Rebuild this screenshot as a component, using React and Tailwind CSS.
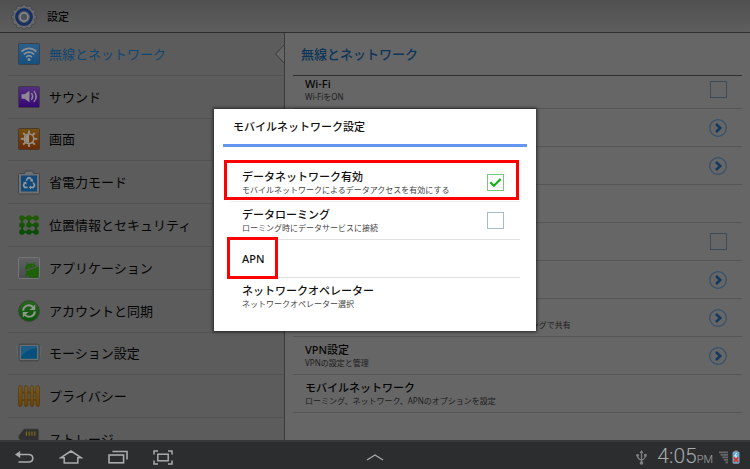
import React, { useState } from 'react';

const WifiIcon = () => (
  <svg viewBox="0 0 22 22" className="w-[22px] h-[22px]">
    <defs>
      <linearGradient id="wifiBg" x1="0" y1="0" x2="0" y2="1">
        <stop offset="0" stopColor="#2d5f8c" />
        <stop offset="1" stopColor="#14507f" />
      </linearGradient>
    </defs>
    <rect x="0.5" y="0.5" width="21" height="21" rx="1.2" fill="url(#wifiBg)" stroke="#3c4248" />
    <g fill="none" stroke="#8b9094" strokeWidth="1.7">
      <path d="M3.6 8.6C7.8 4.2 14.2 4.2 18.4 8.6" />
      <path d="M5.8 11.4C8.8 8.4 13.2 8.4 16.2 11.4" />
      <path d="M8.1 14.1C9.9 12.4 12.1 12.4 13.9 14.1" />
    </g>
    <circle cx="11" cy="16.6" r="1.5" fill="#8b9094" />
  </svg>
);

const SoundIcon = () => (
  <svg viewBox="0 0 22 22" className="w-[22px] h-[22px]">
    <defs>
      <linearGradient id="soundBg" x1="0" y1="0" x2="0" y2="1">
        <stop offset="0" stopColor="#533080" />
        <stop offset="1" stopColor="#350573" />
      </linearGradient>
    </defs>
    <rect x="0.5" y="0.5" width="21" height="21" rx="1.2" fill="url(#soundBg)" stroke="#40394a" />
    <path d="M3.5 8.2H6.5L11.5 4.8V16.2L6.5 12.8H3.5Z" fill="#8d8893" />
    <g fill="none" stroke="#8d8893" strokeWidth="1.4" strokeLinecap="round">
      <path d="M13.7 7.6C15 9.4 15 11.6 13.7 13.4" />
      <path d="M16.2 5.6C18.6 8.6 18.6 12.4 16.2 15.4" />
    </g>
  </svg>
);

const DisplayIcon = () => (
  <svg viewBox="0 0 22 22" className="w-[22px] h-[22px]">
    <defs>
      <linearGradient id="displayBg" x1="0" y1="0" x2="0" y2="1">
        <stop offset="0" stopColor="#75500f" />
        <stop offset="1" stopColor="#6a2a05" />
      </linearGradient>
    </defs>
    <rect x="0.5" y="0.5" width="21" height="21" rx="1.2" fill="url(#displayBg)" stroke="#483a2c" />
    <path
      d="M11 2.6V5.6M11 16V19M2.8 10.8H5.8M16.2 10.8H19.2M5.2 5L7.3 7.1M14.7 14.5L16.8 16.6M16.8 5L14.7 7.1M7.3 14.5L5.2 16.6"
      stroke="#98928a"
      strokeWidth="1.8"
    />
    <circle cx="11" cy="10.8" r="4.8" fill="#6f3c0a" stroke="#98928a" strokeWidth="1.5" />
    <path d="M11 6.8A4 4 0 0 0 11 14.8Z" fill="#98928a" />
  </svg>
);

const PowerIcon = () => (
  <svg viewBox="0 0 22 25" className="w-[22px] h-[25px]">
    <path
      d="M1.5 3.5H6.6L7.4 1H14.6L15.4 3.5H20.5C21.2 3.5 21.5 3.9 21.5 4.5V22.5C21.5 23.6 21 24 20 24H2C1 24 0.5 23.6 0.5 22.5V4.5C0.5 3.9 0.8 3.5 1.5 3.5Z"
      fill="#6f7173"
      stroke="#454545"
    />
    <rect x="3" y="5.5" width="16" height="16" fill="#104a7b" />
    <g fill="none" stroke="#8f9599" strokeWidth="1.7">
      <path d="M8.3 10.6L10 7.8H12L13.6 10.3" />
      <path d="M15.2 12.6L16.6 15.2L15.4 17.4H12" />
      <path d="M9.6 17.4H6.6L5.5 15.2L7 12.4" />
    </g>
    <path d="M14.9 8.8V11.9L11.9 11ZM13 15.3V19.4L10.8 17.4ZM4.8 12.7L8.2 11.4L8.6 14.4Z" fill="#8f9599" />
  </svg>
);

const SecurityIcon = () => (
  <svg viewBox="0 0 22 22" className="w-[22px] h-[22px]">
    <defs>
      <linearGradient id="dots" gradientUnits="userSpaceOnUse" x1="0" y1="1" x2="0" y2="21">
        <stop offset="0" stopColor="#245c05" />
        <stop offset="1" stopColor="#064a08" />
      </linearGradient>
    </defs>
    <g fill="url(#dots)">
      <rect x="3" y="3" width="16" height="2" />
      <rect x="10" y="10" width="9" height="2" />
      <rect x="3" y="17" width="16" height="2" />
      <rect x="3" y="4" width="2" height="14" />
      <rect x="17" y="11" width="2" height="7" />
      <rect x="10" y="4" width="2" height="7" />
      {[4, 11, 18].map((y) => [4, 11, 18].map((x) => <circle key={`${x}-${y}`} cx={x} cy={y} r="2.8" />))}
    </g>
  </svg>
);

const AppsIcon = () => (
  <svg viewBox="0 0 22 22" className="w-[22px] h-[22px]">
    <defs>
      <linearGradient id="appBg" x1="0" y1="0" x2="0" y2="1">
        <stop offset="0" stopColor="#5f6062" />
        <stop offset="1" stopColor="#4b4c4d" />
      </linearGradient>
    </defs>
    <rect x="0.5" y="0.5" width="21" height="21" rx="1.2" fill="url(#appBg)" stroke="#747577" />
    <path d="M7.2 13C6.6 9 9 6.8 12.2 6.6C15.2 6.2 17.8 7.6 18.2 9.2Z" fill="#1d6208" />
    <path d="M7.6 14.2L18.6 10.2L20.6 9.4L21 13L20.2 20.8H11.6L10.4 18L8.4 19.8L6.6 18.2L8.6 16.6Z" fill="#1d6208" />
    <path d="M9.8 7.4L8.6 5.2M15.6 7L16.4 5" stroke="#1d6208" strokeWidth="0.9" />
    <circle cx="10.6" cy="9.9" r="0.6" fill="#5c5c5c" />
    <circle cx="14.8" cy="8.6" r="0.6" fill="#5c5c5c" />
  </svg>
);

const SyncIcon = () => (
  <svg viewBox="0 0 22 22" className="w-[22px] h-[22px]">
    <defs>
      <linearGradient id="syncBg" x1="0" y1="0" x2="0" y2="1">
        <stop offset="0" stopColor="#2b6520" />
        <stop offset="1" stopColor="#07540a" />
      </linearGradient>
    </defs>
    <circle cx="11" cy="11" r="10.4" fill="url(#syncBg)" stroke="#344a30" />
    <g fill="none" stroke="#8f968d" strokeWidth="2">
      <path d="M5.2 10.6C5.4 5.6 11.4 3.4 15 7" />
      <path d="M16.8 11.4C16.6 16.4 10.6 18.6 7 15" />
    </g>
    <path d="M17.2 4.4V10H11.6ZM4.8 17.6V12H10.4Z" fill="#8f968d" />
  </svg>
);

const MotionIcon = () => (
  <svg viewBox="0 0 26 20" className="w-[26px] h-5">
    <path d="M0.6 3.5L4 2.4V16.6L2.6 17ZM25.4 3.5L22 2.4V16.6L23.4 17Z" fill="#55636c" stroke="#6b757b" strokeWidth="0.5" />
    <rect x="3" y="1.2" width="20" height="16.6" rx="1.6" fill="#6d7072" stroke="#3b3d3f" />
    <rect x="5" y="3.2" width="16" height="12.6" fill="#07507c" />
    <path d="M5 3.2H21V5C14 6 8 9 5 14Z" fill="#1d5e84" />
  </svg>
);

const PrivacyIcon = () => (
  <svg viewBox="0 0 22 22" className="w-[22px] h-[22px]">
    <defs>
      <linearGradient id="fence" x1="0" y1="0" x2="0" y2="1">
        <stop offset="0" stopColor="#7a5a1c" />
        <stop offset="1" stopColor="#6f4100" />
      </linearGradient>
    </defs>
    <path d="M0.5 6.5H21.5V8.5H0.5ZM0.5 14H21.5V16H0.5Z" fill="#5f4210" />
    {[0.5, 6.3, 12.1, 17.9].map((x) => (
      <rect key={x} x={x} y="0.8" width="3.6" height="20.6" rx="1.6" fill="url(#fence)" stroke="#4a3716" strokeWidth="0.6" />
    ))}
  </svg>
);

const StorageIcon = () => (
  <svg viewBox="0 0 22 22" className="w-[22px] h-[22px]">
    <path d="M6 1H19.4C20.2 1 20.6 1.4 20.6 2.2V21H2.4V12L0.8 10.4V7.6Z" fill="#303030" stroke="#454545" strokeWidth="0.8" />
    <path d="M8.4 3.4V7.8M11.2 3.4V7.8M14 3.4V7.8M16.8 3.4V7.8" stroke="#77691f" strokeWidth="1.3" />
  </svg>
);

const GearIcon = () => (
  <svg viewBox="0 0 26 26" className="w-[26px] h-[26px]">
    <g fill="#68696b" stroke="#3d3e40" strokeWidth="0.7">
      {[0, 30, 60, 90, 120, 150].map((deg) => (
        <rect key={deg} x="11" y="0.6" width="4" height="24.8" rx="1.4" transform={`rotate(${deg} 13 13)`} />
      ))}
    </g>
    <circle cx="13" cy="13" r="10.6" fill="#68696b" />
    <circle cx="13" cy="13" r="7.4" fill="#5d6165" stroke="#172f63" strokeWidth="3" />
    <circle cx="13" cy="13" r="4" fill="#4f5357" stroke="#85888b" strokeWidth="1.5" />
  </svg>
);

const ChevronBadge = () => (
  <svg viewBox="0 0 18 18" className="w-[18px] h-[18px]">
    <circle cx="9" cy="9" r="8.3" fill="none" stroke="#33506c" strokeWidth="1.2" />
    <path d="M7 5L11.2 9L7 13" fill="none" stroke="#143a61" strokeWidth="2.6" />
  </svg>
);

const BackIcon = () => (
  <svg viewBox="0 0 20 14" className="w-5 h-3.5" fill="none" stroke="#a9abad" strokeWidth="1.6">
    <path d="M3 4.5H14.5C17.4 4.5 18.8 6 18.8 8.3S17.4 12 14.5 12H4.5" />
    <path d="M6.2 1L1 4.5L6.2 8Z" fill="#a9abad" stroke="none" />
  </svg>
);

const HomeIcon = () => (
  <svg viewBox="0 0 24 14" className="w-6 h-3.5" fill="none" stroke="#a9abad" strokeWidth="1.5">
    <path d="M5.2 7.8H1.6L12 1L22.4 7.8H18.8V13H5.2Z" />
  </svg>
);

const RecentIcon = () => (
  <svg viewBox="0 0 20 14" className="w-5 h-3.5" fill="none" stroke="#a9abad" strokeWidth="1.6">
    <rect x="1" y="5" width="14.6" height="7.8" />
    <path d="M4.4 1.5H19V9.6" />
  </svg>
);

const CaptureIcon = () => (
  <svg viewBox="0 0 20 15" className="w-5 h-[15px]" fill="none" stroke="#a9abad" strokeWidth="1.5">
    <rect x="4.8" y="4.2" width="10.4" height="6.6" />
    <path d="M1 4.6V1H5M15 1H19V4.6M19 10.4V14H15M5 14H1V10.4" />
  </svg>
);

const UsbIcon = () => (
  <svg viewBox="0 0 11 15" className="w-[11px] h-[15px]" fill="none" stroke="#7e8082" strokeWidth="1.3">
    <path d="M5.5 2.5V12M5.5 10.2C2.8 9.4 1.6 8.6 1.6 5.4M5.5 10.2C8.2 9.4 9.4 8.6 9.4 4.8" />
    <path d="M5.5 0L7.4 3H3.6Z" fill="#7e8082" stroke="none" />
    <circle cx="5.5" cy="13" r="1.8" fill="#7e8082" stroke="none" />
    <circle cx="1.6" cy="5.4" r="1.4" fill="#7e8082" stroke="none" />
    <rect x="8.1" y="4" width="2.6" height="2.6" fill="#7e8082" stroke="none" />
  </svg>
);

const SignalIcon = () => (
  <svg viewBox="0 0 9 13" className="w-[9px] h-[13px]" stroke="#66686a" strokeWidth="1.9">
    <path d="M0 1.4H9M1.6 3.9H9M3.2 6.4H9M4.8 8.9H9M6.4 11.4H9" />
  </svg>
);

const BatteryIcon = () => (
  <svg viewBox="0 0 8 14" className="w-2 h-3.5">
    <rect x="2.5" y="0.5" width="3" height="2" fill="#7f8488" />
    <rect x="1" y="2" width="6" height="11.2" rx="0.5" fill="#4fa6da" stroke="#9fb4c0" strokeWidth="0.8" />
    <path d="M4.6 3L2.8 6H4.6L3.6 8.4" fill="none" stroke="#d9ecf5" strokeWidth="1.1" />
    <path d="M1.8 7.4L6.2 11.8M6.2 7.4L1.8 11.8" stroke="#d8382c" strokeWidth="1.8" />
  </svg>
);

const menu = [
  { label: '無線とネットワーク', icon: WifiIcon },
  { label: 'サウンド', icon: SoundIcon },
  { label: '画面', icon: DisplayIcon },
  { label: '省電力モード', icon: PowerIcon },
  { label: '位置情報とセキュリティ', icon: SecurityIcon },
  { label: 'アプリケーション', icon: AppsIcon },
  { label: 'アカウントと同期', icon: SyncIcon },
  { label: 'モーション設定', icon: MotionIcon },
  { label: 'プライバシー', icon: PrivacyIcon },
  { label: 'ストレージ', icon: StorageIcon },
];

const networkRows = [
  { id: 'wifi', title: 'Wi-Fi', sub: 'Wi-FiをON', type: 'check' },
  { id: 'wifi-settings', name: 'Wi-Fi設定', type: 'link' },
  { id: 'wifi-direct', name: 'Wi-Fi Direct設定', type: 'link' },
  { id: 'kies', type: 'none' },
  { id: 'bluetooth', name: 'Bluetooth', type: 'check' },
  { id: 'bluetooth-settings', name: 'Bluetooth設定', type: 'link' },
  {
    id: 'tethering',
    name: 'テザリング',
    sub: 'タブレットのモバイルデータ通信接続をUSBまたはWi-Fiテザリングで共有',
    type: 'link',
  },
  { id: 'vpn', title: 'VPN設定', sub: 'VPNの設定と管理', type: 'link' },
  { id: 'mobile', title: 'モバイルネットワーク', sub: 'ローミング、ネットワーク、APNのオプションを設定', type: 'none' },
];

const NetworkRow = ({ row }) => {
  const [on, setOn] = useState(false);

  return (
    <li className="h-[38px] flex items-center justify-between pl-3 pr-[15px] border-b border-[#565656]">
      <div className="whitespace-nowrap">
        <label htmlFor={row.id} className="block h-3.5 text-[11px] leading-[14px] font-medium text-[#050505]">
          {row.title}
        </label>
        <p className="text-[8px] leading-[11px] text-[#1c1c1c]">{row.sub}</p>
      </div>
      {row.type === 'check' && (
        <input
          id={row.id}
          type="checkbox"
          aria-label={row.title || row.name}
          checked={on}
          onChange={() => setOn(!on)}
          className="appearance-none w-[17px] h-[17px] border border-[#3b4b58] checked:bg-[#3b4b58]"
        />
      )}
      {row.type === 'link' && (
        <button id={row.id} aria-label={row.title || row.name}>
          <ChevronBadge />
        </button>
      )}
    </li>
  );
};

const DialogCheck = ({ id, checked, onChange }) => (
  <span className="relative w-[17px] h-[17px]">
    <input
      id={id}
      type="checkbox"
      checked={checked}
      onChange={onChange}
      className="block appearance-none w-[17px] h-[17px] border border-[#a5bccd] checked:border-[#7cc67c]"
    />
    {checked && (
      <svg viewBox="0 0 17 17" className="absolute inset-0 w-[17px] h-[17px] pointer-events-none">
        <path d="M3.2 8.2L6.9 11.8L13.6 5" fill="none" stroke="#10b410" strokeWidth="2.1" />
      </svg>
    )}
  </span>
);

const MobileNetworkDialog = () => {
  const [dataOn, setDataOn] = useState(true);
  const [roaming, setRoaming] = useState(false);

  return (
    <div
      role="dialog"
      aria-labelledby="dialog-title"
      className="w-[322px] bg-white pb-4 shadow-[0_0_3px_1px_rgba(0,0,0,0.6)]"
    >
      <h2 id="dialog-title" className="h-[35px] pl-[19px] text-[11px] leading-9 font-medium text-[#111]">
        モバイルネットワーク設定
      </h2>
      <div className="mx-[9px] h-[3px] bg-[#6495f0]"></div>

      <ul className="mx-4 mt-4">
        <li className="relative h-[38px] flex items-center justify-between pl-3 pr-4">
          <label htmlFor="data-enabled">
            <span className="block text-[11px] leading-[14px] font-medium text-[#111]">データネットワーク有効</span>
            <span className="block text-[8px] leading-[11px] text-[#444]">
              モバイルネットワークによるデータアクセスを有効にする
            </span>
          </label>
          <DialogCheck id="data-enabled" checked={dataOn} onChange={() => setDataOn(!dataOn)} />
          {/* highlight frame */}
          <div className="absolute -top-[3px] -left-1.5 right-px bottom-px border-3 border-[#f00] pointer-events-none"></div>
        </li>
        <li className="h-[38px] flex items-center justify-between pl-3 pr-4 border-t border-[#eee]">
          <label htmlFor="data-roaming">
            <span className="block text-[11px] leading-[14px] font-medium text-[#111]">データローミング</span>
            <span className="block text-[8px] leading-[11px] text-[#444]">ローミング時にデータサービスに接続</span>
          </label>
          <DialogCheck id="data-roaming" checked={roaming} onChange={() => setRoaming(!roaming)} />
        </li>
        <li className="relative h-[38px] border-t border-[#e0e0e0]">
          <button className="w-full h-full pl-3 text-left text-[11px] leading-[14px] font-medium text-[#111]">APN</button>
          <div className="absolute -top-[3px] -left-[3px] w-[51px] h-[42px] border-3 border-[#f00] pointer-events-none"></div>
        </li>
        <li className="h-[38px] border-t border-[#e0e0e0]">
          <button className="w-full h-full pl-3 text-left">
            <span className="block text-[11px] leading-[14px] font-medium text-[#111]">ネットワークオペレーター</span>
            <span className="block text-[8px] leading-[11px] text-[#444]">ネットワークオペレーター選択</span>
          </button>
        </li>
      </ul>
    </div>
  );
};

export default function App() {
  const [active, setActive] = useState(0);

  return (
    <div className="h-screen flex flex-col overflow-hidden bg-[#666] font-['Noto_Sans','Noto_Sans_CJK_JP',sans-serif]">
      <div className="relative flex-1 min-h-0 flex flex-col">
        <header className="h-[33px] shrink-0 flex items-center gap-2.5 pt-px pl-[11px] bg-linear-to-b from-[#505050] to-[#5e5e5e] border-b border-[#2e2e2e]">
          <GearIcon />
          <h1 className="text-[11px] leading-[14px] font-medium text-[#080808]">設定</h1>
        </header>

        <div className="flex-1 min-h-0 flex">
          <nav className="w-[38%] overflow-hidden bg-[#5c5c5c] border-r border-[#3a3a3a]">
            <ul className="ml-2 h-[428px] grid grid-rows-10">
              {menu.map((item, i) => (
                <li key={item.label} className="relative border-b border-[#535353]">
                  <button
                    onClick={() => setActive(i)}
                    className={`w-full h-full flex items-center gap-[9px] pl-2.5 text-[13px] leading-5 whitespace-nowrap ${
                      active === i ? 'text-[#0f4672]' : 'text-[#050505]'
                    }`}
                  >
                    <span className="w-[22px] flex justify-center">
                      <span className="shrink-0">
                        <item.icon />
                      </span>
                    </span>
                    {item.label}
                  </button>
                  {active === i && (
                    <svg viewBox="0 0 10 20" className="absolute top-[11px] -right-px w-2.5 h-5">
                      <path d="M10 0L0.6 10L10 20Z" fill="#666" />
                      <path d="M10 0L0.6 10L10 20" fill="none" stroke="#3a3a3a" />
                    </svg>
                  )}
                </li>
              ))}
            </ul>
          </nav>

          <main className="flex-1 min-w-0 px-2 flex flex-col bg-[#666]">
            <h2 className="h-[43px] shrink-0 pl-2 text-[13px] leading-[42px] font-medium text-[#0c3559] border-b border-[#2f2f2f]">
              無線とネットワーク
            </h2>
            <div className="flex-1 min-h-0 overflow-hidden">
              <ul className="-mt-[5px]">
                {networkRows.map((row) => (
                  <NetworkRow key={row.id} row={row} />
                ))}
              </ul>
            </div>
          </main>
        </div>

        <div className="absolute inset-0 flex items-center justify-center">
          <MobileNetworkDialog />
        </div>
      </div>

      <footer className="h-[29px] shrink-0 grid grid-cols-[1fr_auto_1fr] items-center bg-[#2b2d2f] border-t-2 border-[#38393a]">
        <div className="flex items-center gap-[25px] pl-3.5">
          <button aria-label="戻る"><BackIcon /></button>
          <button aria-label="ホーム"><HomeIcon /></button>
          <button aria-label="履歴"><RecentIcon /></button>
          <button aria-label="画面キャプチャ"><CaptureIcon /></button>
        </div>
        <button aria-label="ミニアプリ">
          <svg viewBox="0 0 18 7" className="w-[18px] h-[7px]" fill="none" stroke="#a9abad" strokeWidth="1.3">
            <path d="M1 6L9 1L17 6" />
          </svg>
        </button>
        <div className="flex items-center justify-end pr-2.5">
          <UsbIcon />
          <p className="pt-0.5 ml-2.5 mr-1.5 text-[21px] leading-6 font-light text-[#a9abad] font-['Roboto',sans-serif]">
            4:05<span className="text-[11px]">PM</span>
          </p>
          <SignalIcon />
          <span className="ml-1">
            <BatteryIcon />
          </span>
        </div>
      </footer>
    </div>
  );
}
